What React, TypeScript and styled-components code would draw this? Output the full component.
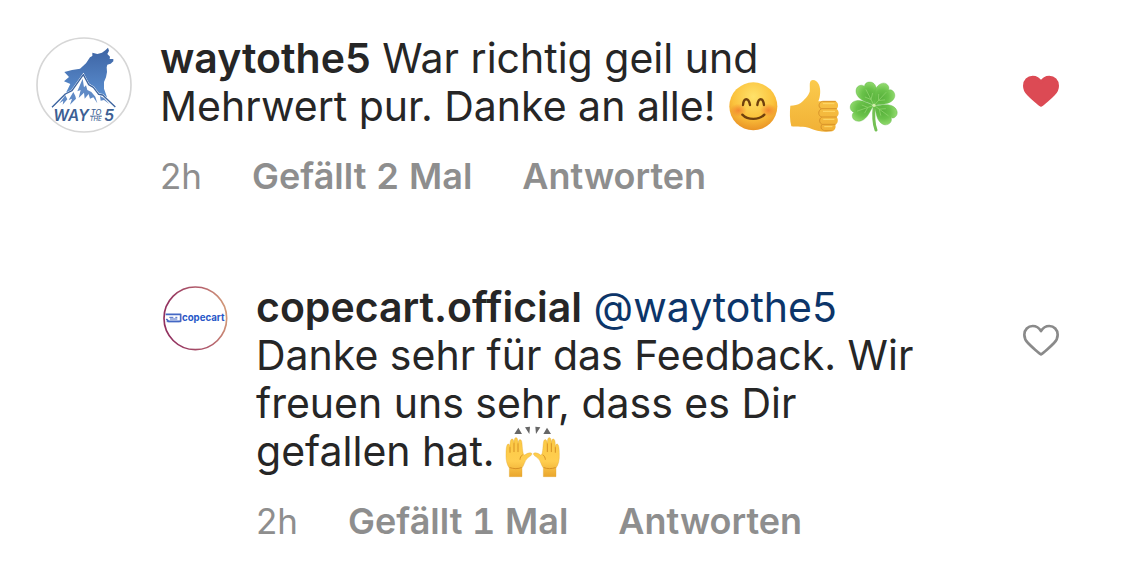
import React, { useState } from "react";
import styled, { createGlobalStyle } from "styled-components";

const GlobalStyle = createGlobalStyle`
  *, *::before, *::after { box-sizing: border-box; }
  body {
    margin: 0;
    background: #ffffff;
    color: #262626;
    font-family: Inter, "Liberation Sans", sans-serif;
  }
`;

const Thread = styled.main`
  display: flex;
  flex-direction: column;
  gap: 85px;
  padding: 34px 66px 28px 36px;
`;

const Comment = styled.article<{ $reply?: boolean }>`
  display: flex;
  align-items: flex-start;
  gap: 28px;
  padding-left: ${(p) => (p.$reply ? 127 : 0)}px;
`;

const Avatar = styled.svg<{ $size: number }>`
  flex: none;
  width: ${(p) => p.$size}px;
  height: ${(p) => p.$size}px;
  margin-top: 3px;
`;

const Body = styled.div`
  flex: 1;
  min-width: 0;
  display: flex;
  flex-direction: column;
  gap: 24px;
  padding-right: 60px;
`;

const Message = styled.p`
  margin: 0;
  font-size: 41px;
  line-height: 48px;
`;

const Author = styled.a`
  color: inherit;
  font-weight: 600;
  text-decoration: none;
`;

const Mention = styled.a`
  color: #0c3569;
  text-decoration: none;
`;

const EmojiSvg = styled.svg`
  width: 60px;
  height: 60px;
  margin: -6px 0;
`;

const EmojiGroup = styled.span`
  display: inline-flex;
  height: 48px;
  margin-left: -4px;
  vertical-align: bottom;
`;

const Meta = styled.div`
  display: flex;
  gap: 50px;
  font-size: 35px;
  line-height: 44px;
  color: #8e8e8e;
`;

const MetaButton = styled.button`
  padding: 0;
  border: 0;
  background: none;
  color: inherit;
  font-family: inherit;
  font-size: 36px;
  font-weight: 600;
  font-variant-numeric: tabular-nums;
  line-height: inherit;
  cursor: pointer;
`;

const LikeButton = styled.button`
  flex: none;
  display: flex;
  margin: 41px 0 0;
  padding: 0;
  border: 0;
  background: none;
  cursor: pointer;
`;

const HeartSvg = styled.svg`
  width: 36px;
  height: 33px;
`;

function Heart({ initial }: { initial: boolean }) {
  const [liked, setLiked] = useState(initial);
  return (
    <LikeButton
      type="button"
      aria-label="Gefällt mir"
      aria-pressed={liked}
      onClick={() => setLiked(!liked)}
    >
      <HeartSvg viewBox="39 45 108 99">
        <path
          d="M93 136 C88 133 64 113 54 102 C46 94 43 86 43 77 C43 62 54 51 68 51 C79 51 87 56 93 66 C99 56 107 51 118 51 C132 51 143 62 143 77 C143 86 140 94 132 102 C122 113 98 133 93 136 Z"
          fill={liked ? "#dc4a54" : "none"}
          stroke={liked ? "#dc4a54" : "#8a8a8a"}
          strokeWidth="8"
          strokeLinejoin="round"
        />
      </HeartSvg>
    </LikeButton>
  );
}

function WolfAvatar() {
  return (
    <Avatar $size={96} viewBox="18 21 288 288" role="img" aria-label="waytothe5">
      <defs>
        <linearGradient id="wolf" x1="0" y1="0" x2="0" y2="1">
          <stop offset="0" stopColor="#3d63a3" />
          <stop offset="1" stopColor="#5b8fd0" />
        </linearGradient>
      </defs>
      <circle cx="162" cy="165" r="141" fill="#fff" stroke="#d6d6d6" strokeWidth="5" />
      <path
        d="M234 53 L237 62 L232 72 L240 80 L239 87 L250 87 L250 94 L242 101 L232 104 L230 112 L231 126 L228 142 L222 156 L222 176 L231 202 L206 194 L190 170 L176 160 L160 130 L144 158 L126 180 L108 188 L121 162 L102 154 L117 141 L103 126 L126 120 L150 116 L168 100 L180 82 L187 78 L187 68 L202 72 L216 68 L227 60 Z"
        fill="url(#wolf)"
      />
      <path
        d="M66 232 L106 192 L126 182 L160 134 L176 164 L190 172 L206 193 L218 195 L256 231 L214 212 L196 221 L178 208 L160 222 L142 208 L120 222 L104 208 Z"
        fill="#fff"
        stroke="#fff"
        strokeWidth="6"
      />
      <g fill="none" stroke="#3b639f" strokeWidth="4" strokeLinejoin="round">
        <path d="M66 232 L106 192 L126 182 L160 134 L176 164 L190 172 L206 193 L218 195 L256 231" />
      </g>
      <g fill="#5f8ac6">
        <path d="M106 196 L88 220 L100 212 L98 224 L112 208 Z" />
        <path d="M130 186 L116 210 L126 206 L120 224 L138 206 L136 198 Z" />
        <path d="M158 146 L142 184 L152 180 L146 204 L162 188 L164 206 L176 192 L180 206 L190 202 L202 220 L196 200 L184 186 L172 180 L168 166 L162 172 Z" />
        <path d="M210 198 L212 212 L222 210 L238 222 L222 204 Z" />
      </g>
      <g fill="#3d5f94" fontFamily="Inter, sans-serif" fontStyle="italic" fontWeight="600">
        <text x="70" y="274" fontSize="46">WAY</text>
        <text x="222" y="274" fontSize="48">5</text>
        <text x="182" y="254" fontSize="23" fontWeight="500">TO</text>
        <text x="179" y="274" fontSize="18" fontWeight="500">THE</text>
      </g>
      <path d="M180 258 H216" stroke="#3d5f94" strokeWidth="2" />
    </Avatar>
  );
}

function CopecartAvatar() {
  return (
    <Avatar $size={65} viewBox="23 20 195 195" role="img" aria-label="copecart.official">
      <defs>
        <linearGradient id="ring" x1="0" y1="0.2" x2="1" y2="0">
          <stop offset="0" stopColor="#92315f" />
          <stop offset="0.6" stopColor="#b4606c" />
          <stop offset="1" stopColor="#d9a77c" />
        </linearGradient>
      </defs>
      <circle cx="120" cy="117" r="94" fill="#fff" stroke="url(#ring)" strokeWidth="5" />
      <g fill="none" stroke="#4468c4" strokeWidth="5" strokeLinejoin="round">
        <path d="M31 105 H76 V126 H40 L33 119" />
        <path d="M34 127 H72 M42 114 H54 M60 114 H66 M44 119 H66" strokeWidth="3" />
      </g>
      <text x="80" y="124" fontFamily="Inter, sans-serif" fontWeight="700" fontSize="29" fill="#2857c8">
        copecart
      </text>
    </Avatar>
  );
}

function SmileEmoji() {
  return (
    <EmojiSvg viewBox="9 18 180 180" role="img" aria-label="Lächeln">
      <defs>
        <radialGradient id="face" cx="0.5" cy="0.3" r="0.72">
          <stop offset="0" stopColor="#ffe26a" />
          <stop offset="0.6" stopColor="#fbc23c" />
          <stop offset="1" stopColor="#e88f24" />
        </radialGradient>
        <radialGradient id="blush">
          <stop offset="0" stopColor="#f0742c" stopOpacity="0.75" />
          <stop offset="1" stopColor="#f0742c" stopOpacity="0" />
        </radialGradient>
      </defs>
      <circle cx="100" cy="109" r="72" fill="url(#face)" />
      <ellipse cx="55" cy="121" rx="25" ry="20" fill="url(#blush)" />
      <ellipse cx="145" cy="121" rx="25" ry="20" fill="url(#blush)" />
      <g fill="none" stroke="#70400d" strokeWidth="7" strokeLinecap="round">
        <path d="M69 105 C71 82 86 82 90 105" />
        <path d="M112 105 C115 82 129 82 132 105" />
        <path d="M67 134 C83 151 117 151 133 134" />
      </g>
    </EmojiSvg>
  );
}

function ThumbEmoji() {
  return (
    <EmojiSvg viewBox="189 18 180 180" role="img" aria-label="Daumen hoch">
      <defs>
        <linearGradient id="thumb" x1="0" y1="0" x2="0" y2="1">
          <stop offset="0" stopColor="#fbcb4d" />
          <stop offset="1" stopColor="#f1b136" />
        </linearGradient>
      </defs>
      <path
        d="M211 107 C222 106 234 105 242 99 C252 90 265 78 269 65 C271 55 267 39 272 33 C279 26 292 33 297 44 C303 59 301 79 295 94 L344 93 C354 94 358 109 350 117 C358 123 358 136 350 141 C356 148 354 161 346 164 C349 174 343 183 334 184 C312 187 286 183 268 174 C255 169 228 172 214 169 C209 150 209 126 211 107 Z"
        fill="url(#thumb)"
      />
      <g fill="none" stroke="#d8932a" strokeWidth="3" strokeLinecap="round">
        <path d="M346 94 H308 C296 96 293 112 304 116 H349" />
        <path d="M303 117 C293 122 294 138 305 141 H349" />
        <path d="M304 142 C296 147 297 160 307 163 H345" />
        <path d="M306 164 C300 169 303 180 314 182 L334 182" />
      </g>
      <g fill="none" stroke="#ffd96a" strokeWidth="3" strokeLinecap="round">
        <path d="M310 101 H342 M310 124 H344 M311 148 H342 M314 170 H336" />
      </g>
    </EmojiSvg>
  );
}

function CloverEmoji() {
  const leaf =
    "M0 0 C-8 -14 -29 -27 -29 -47 C-29 -60 -20 -69 -10 -67 C-3 -66 0 -61 0 -58 C1 -61 6 -66 13 -65 C24 -63 30 -54 28 -42 C26 -25 9 -15 0 0 Z";
  return (
    <EmojiSvg viewBox="369 18 180 180" role="img" aria-label="Kleeblatt">
      <defs>
        <radialGradient id="leaf" cx="0.5" cy="0.6" r="0.6">
          <stop offset="0" stopColor="#58b13c" />
          <stop offset="0.6" stopColor="#6ac24a" />
          <stop offset="1" stopColor="#8bd668" />
        </radialGradient>
      </defs>
      <path d="M463 108 C460 132 460 158 468 180" fill="none" stroke="#74c054" strokeWidth="9" strokeLinecap="round" />
      {[-27, 43, 126, -109].map((angle) => (
        <g key={angle} transform={`translate(462 106) rotate(${angle}) scale(1.08)`}>
          <path d={leaf} fill="url(#leaf)" stroke="#5cb340" strokeWidth="1" />
          <path d="M0 -3 V-50 M0 -18 L-12 -32 M0 -18 L12 -32" fill="none" stroke="#8fd46d" strokeWidth="2" />
        </g>
      ))}
      <circle cx="462" cy="106" r="5" fill="#d4efae" />
    </EmojiSvg>
  );
}

function HandsEmoji() {
  const hand =
    "M34 173 V147 C27 138 23 123 24 105 C24 94 25 77 30 75 C35 74 35 80 36 86 C36 74 36 61 42 60 C47 60 47 66 48 74 C48 64 49 56 54 56 C59 56 60 64 60 75 C61 66 63 61 67 62 C73 63 72 78 74 94 C75 102 76 107 80 108 C88 102 98 99 101 103 C104 108 95 112 88 118 C81 124 77 142 72 147 V173 Z";
  const fingers = "M36 86 V100 M48 74 V98 M60 75 V98 M73 108 C69 110 66 116 66 121 M36 146 C46 150 62 150 70 146";
  return (
    <EmojiSvg viewBox="12 6 180 180" role="img" aria-label="Erhobene Hände">
      <defs>
        <linearGradient id="hand" x1="0" y1="0" x2="0" y2="1">
          <stop offset="0" stopColor="#fbc944" />
          <stop offset="0.6" stopColor="#ffce50" />
          <stop offset="1" stopColor="#eaa62d" />
        </linearGradient>
      </defs>
      {["", "translate(208 0) scale(-1 1)"].map((side) => (
        <g key={side} transform={side}>
          <path d={hand} fill="url(#hand)" stroke="#dfa02b" strokeWidth="1" />
          <path d={fingers} fill="none" stroke="#d79125" strokeWidth="3" strokeLinecap="round" />
          <path d="M61 26 L49 45 L72 45 Z M81 25 L96 23 L94 45 Z" fill="#666" />
        </g>
      ))}
    </EmojiSvg>
  );
}

function MetaRow({ likes }: { likes: number }) {
  return (
    <Meta>
      <time>2h</time>
      <MetaButton type="button">Gefällt {likes} Mal</MetaButton>
      <MetaButton type="button">Antworten</MetaButton>
    </Meta>
  );
}

export default function App() {
  return (
    <>
      <GlobalStyle />
      <Thread>
        <Comment>
          <WolfAvatar />
          <Body>
            <Message>
              <Author href="#waytothe5">waytothe5</Author> War richtig geil und Mehrwert pur. Danke an alle!{" "}
              <EmojiGroup>
                <SmileEmoji />
                <ThumbEmoji />
                <CloverEmoji />
              </EmojiGroup>
            </Message>
            <MetaRow likes={2} />
          </Body>
          <Heart initial={true} />
        </Comment>
        <Comment $reply>
          <CopecartAvatar />
          <Body>
            <Message>
              <Author href="#copecart">copecart.official</Author> <Mention href="#waytothe5">@waytothe5</Mention>{" "}
              Danke sehr für das Feedback. Wir freuen uns sehr, dass es Dir gefallen hat.{" "}
              <EmojiGroup>
                <HandsEmoji />
              </EmojiGroup>
            </Message>
            <MetaRow likes={1} />
          </Body>
          <Heart initial={false} />
        </Comment>
      </Thread>
    </>
  );
}
